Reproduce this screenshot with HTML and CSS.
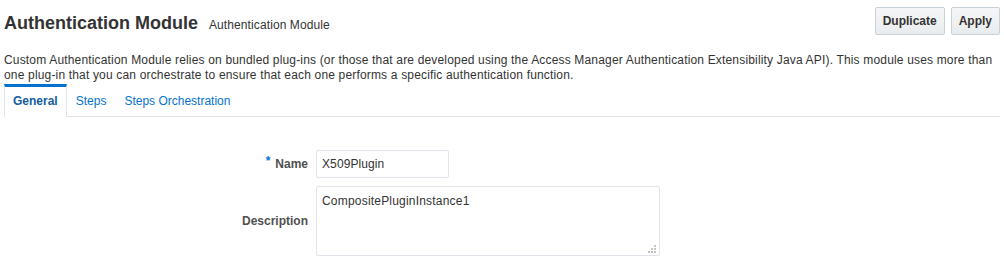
FILE: index.html
```html
<!DOCTYPE html>
<html>
<head>
<meta charset="utf-8">
<link rel="stylesheet" href="styles.css">
</head>
<body>
<div class="page">
  <div class="header">
    <div class="titles">
      <h1 class="title">Authentication Module</h1>
      <span class="subtitle">Authentication Module</span>
    </div>
    <div class="actions">
      <button class="btn">Duplicate</button>
      <button class="btn">Apply</button>
    </div>
  </div>
  <p class="intro">Custom Authentication Module relies on bundled plug-ins (or those that are developed using the Access Manager Authentication Extensibility Java API). This module uses more than one plug-in that you can orchestrate to ensure that each one performs a specific authentication function.</p>
  <div class="tabs">
    <div class="tab active">General</div>
    <div class="tab">Steps</div>
    <div class="tab">Steps Orchestration</div>
  </div>
  <div class="form">
    <label class="label"><span class="req">*</span>Name</label>
    <div class="input">X509Plugin</div>
    <label class="label">Description</label>
    <div class="textarea">CompositePluginInstance1
      <svg class="grip" width="9" height="9" viewBox="0 0 9 9"><g fill="#c4c4c4"><rect x="6" y="0" width="2" height="2"/><rect x="3" y="3" width="2" height="2"/><rect x="6" y="3" width="2" height="2"/><rect x="0" y="6" width="2" height="2"/><rect x="3" y="6" width="2" height="2"/><rect x="6" y="6" width="2" height="2"/></g></svg>
    </div>
  </div>
</div>
</body>
</html>
```
FILE: styles.css
```css
html, body {
  margin: 0;
  padding: 0;
  background: #fff;
}
body {
  font-family: "Liberation Sans", Arial, sans-serif;
  color: #333;
  width: 1004px;
  height: 261px;
  overflow: hidden;
}
.page {
  padding: 0 4px;
}
.header {
  display: flex;
  justify-content: space-between;
  align-items: flex-start;
  height: 44px;
}
.titles {
  display: flex;
  align-items: baseline;
  padding-top: 13px;
}
.title {
  margin: 0;
  font-size: 18px;
  font-weight: bold;
  color: #333;
  line-height: 21px;
}
.subtitle {
  font-size: 12px;
  letter-spacing: 0.1px;
  margin-left: 11px;
  color: #333;
}
.actions {
  display: flex;
  gap: 6px;
  padding-top: 7px;
}
.btn {
  height: 28px;
  padding: 0 7px;
  font-family: "Liberation Sans", Arial, sans-serif;
  font-size: 12px;
  font-weight: bold;
  color: #333;
  background: linear-gradient(#f5f6f7, #e9ecee);
  border: 1px solid #c9d2da;
  border-radius: 2px;
}
.intro {
  margin: 9px 0 0 0;
  font-size: 12px;
  letter-spacing: 0.17px;
  line-height: 15px;
  color: #333;
}
.tabs {
  display: flex;
  margin-top: 1px;
  border-bottom: 1px solid #dfe4ea;
  height: 32px;
}
.tab {
  box-sizing: border-box;
  font-size: 12px;
  color: #0572ce;
  padding: 10px 9px 0 9px;
  line-height: 14px;
}
.tab.active {
  font-weight: bold;
  color: #145c9e;
  border-top: 3px solid #0572ce;
  border-left: 1px solid #dfe4ea;
  border-right: 1px solid #dfe4ea;
  background: #fff;
  padding: 7px 8px 0 8px;
  margin-bottom: -1px;
}
.form {
  display: grid;
  grid-template-columns: 304px auto;
  column-gap: 8px;
  row-gap: 8px;
  margin-top: 33px;
  align-items: center;
}
.label {
  text-align: right;
  font-size: 12px;
  font-weight: bold;
  color: #4f4f4f;
}
.req {
  color: #0572ce;
  margin-right: 5px;
  position: relative;
  top: -3px;
}
.input {
  width: 121px;
  height: 26px;
  border: 1px solid #dfe4ea;
  border-radius: 2px;
  padding: 0 5px;
  font-size: 12px;
  letter-spacing: 0.1px;
  line-height: 26px;
  color: #333;
}
.textarea {
  position: relative;
  width: 332px;
  height: 63px;
  border: 1px solid #dfe4ea;
  border-radius: 2px;
  padding: 5px 5px 0 5px;
  font-size: 12px;
  letter-spacing: 0.2px;
  line-height: 18px;
  color: #333;
}
.grip {
  position: absolute;
  right: 2px;
  bottom: 1px;
}
```
